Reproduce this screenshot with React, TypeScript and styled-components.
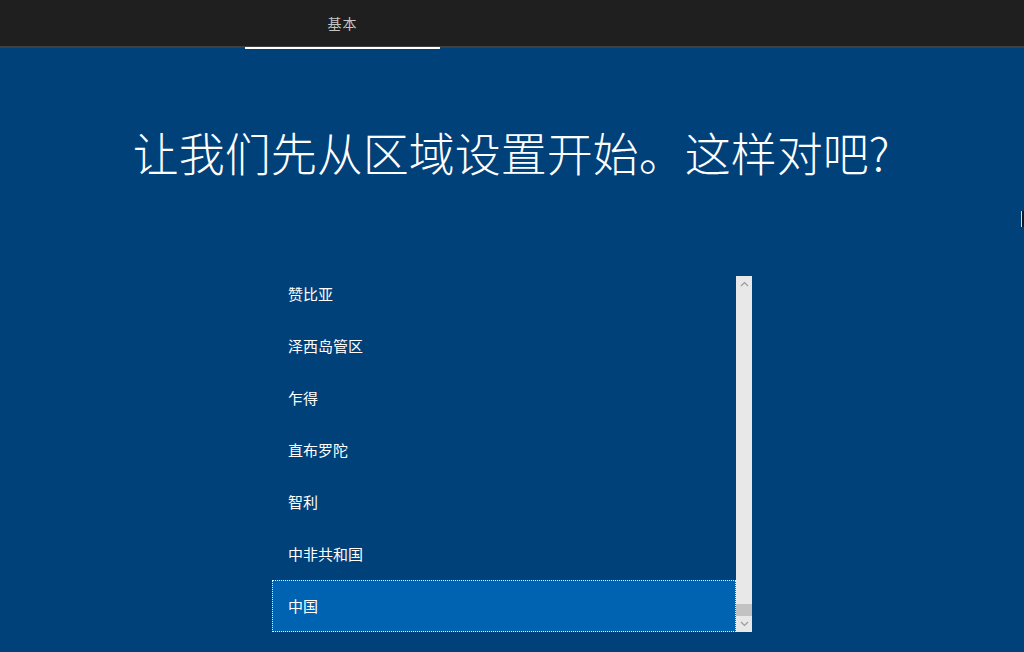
import React from "react";
import styled, { createGlobalStyle } from "styled-components";

const regions = ["赞比亚", "泽西岛管区", "乍得", "直布罗陀", "智利", "中非共和国", "中国"];
const selectedRegion = "中国";

const GlobalStyle = createGlobalStyle`
  html, body {
    margin: 0;
    padding: 0;
    background: #00417a;
  }
  body {
    font-family: "Noto Sans CJK SC", "Noto Sans", sans-serif;
    overflow: hidden;
  }
`;

export default function App() {
  return (
    <>
      <GlobalStyle />
      <Page>
        <TopBar>
          <Tab active>基本</Tab>
        </TopBar>
        <Main>
          <Title>让我们先从区域设置开始。这样对吧?</Title>
          <ListBox>
            <ItemViewport>
              <Items>
                {regions.map((name) => (
                  <Item key={name} selected={name === selectedRegion}>
                    {name}
                  </Item>
                ))}
              </Items>
            </ItemViewport>
            <ScrollBar>
              <ScrollArrow>
                <svg width="9" height="6" viewBox="0 0 9 6">
                  <path d="M1 5 L4.5 1.5 L8 5" fill="none" stroke="#9a9a9a" strokeWidth="1.2" />
                </svg>
              </ScrollArrow>
              <Track />
              <Thumb />
              <ScrollArrow>
                <svg width="9" height="6" viewBox="0 0 9 6">
                  <path d="M1 1 L4.5 4.5 L8 1" fill="none" stroke="#9a9a9a" strokeWidth="1.2" />
                </svg>
              </ScrollArrow>
            </ScrollBar>
          </ListBox>
        </Main>
        <EdgeMark />
      </Page>
    </>
  );
}

const Page = styled.div`
  width: 1024px;
  height: 652px;
  position: relative;
  display: flex;
  flex-direction: column;
  background: #00417a;
  overflow: hidden;
`;

const TopBar = styled.div`
  height: 46px;
  background: #1f1f1f;
  border-bottom: 2px solid #3f3f3f;
  display: flex;
  padding-left: 245px;
`;

const Tab = styled.div<{ active?: boolean }>`
  width: 195px;
  height: 46px;
  margin-bottom: -2px;
  border-bottom: 2px solid ${(p) => (p.active ? "#ffffff" : "transparent")};
  display: flex;
  align-items: center;
  justify-content: center;
  color: #c4c4c4;
  font-size: 14px;
  letter-spacing: 1px;
  padding-bottom: 1px;
  box-sizing: content-box;
`;

const Main = styled.div`
  flex: 1;
  display: flex;
  flex-direction: column;
  align-items: center;
`;

const Title = styled.h1`
  margin: 71px 0 0;
  color: #ffffff;
  font-size: 46px;
  font-weight: 300;
  line-height: 64px;
  letter-spacing: 0;
  transform: translateX(-1px);
`;

const ListBox = styled.div`
  margin-top: 93px;
  width: 480px;
  height: 356px;
  display: flex;
`;

const ItemViewport = styled.div`
  flex: 1;
  overflow: hidden;
`;

const Items = styled.div`
  margin-top: -8px;
  display: flex;
  flex-direction: column;
`;

const Item = styled.div<{ selected?: boolean }>`
  height: 52px;
  box-sizing: border-box;
  display: flex;
  align-items: center;
  padding-left: 15px;
  padding-bottom: 1px;
  color: #ffffff;
  font-size: 15px;
  background: ${(p) => (p.selected ? "#0063b1" : "transparent")};
  border: 1px dotted ${(p) => (p.selected ? "#e8eef5" : "transparent")};
`;

const ScrollBar = styled.div`
  width: 16px;
  background: #e8e8e8;
  display: flex;
  flex-direction: column;
`;

const ScrollArrow = styled.div`
  height: 16px;
  display: flex;
  align-items: center;
  justify-content: center;
`;

const Track = styled.div`
  flex: 1;
`;

const Thumb = styled.div`
  height: 12px;
  background: #c2c2c2;
`;

const EdgeMark = styled.div`
  position: absolute;
  right: 0;
  top: 211px;
  width: 2px;
  height: 16px;
  background: #0b1a2a;
  border-left: 1px solid #d8dde4;
`;
